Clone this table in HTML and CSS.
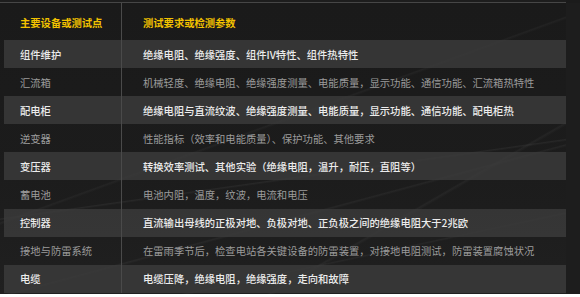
FILE: index.html
```html
<!DOCTYPE html>
<html lang="zh">
<head>
<meta charset="utf-8">
<title>测试要求</title>
<link rel="stylesheet" href="styles.css">
</head>
<body>
<div class="page">
  <div class="topline"></div>
  <div class="main">
    <div class="sheet">
      <div class="row head">
        <div class="c1">主要设备或测试点</div>
        <div class="c2">测试要求或检测参数</div>
      </div>
      <div class="row hi">
        <div class="c1">组件维护</div>
        <div class="c2">绝缘电阻、绝缘强度、组件IV特性、组件热特性</div>
      </div>
      <div class="row lo">
        <div class="c1">汇流箱</div>
        <div class="c2">机械轻度、绝缘电阻、绝缘强度测量、电能质量，显示功能、通信功能、汇流箱热特性</div>
      </div>
      <div class="row hi">
        <div class="c1">配电柜</div>
        <div class="c2">绝缘电阻与直流纹波、绝缘强度测量、电能质量，显示功能、通信功能、配电柜热</div>
      </div>
      <div class="row lo">
        <div class="c1">逆变器</div>
        <div class="c2">性能指标（效率和电能质量）、保护功能、其他要求</div>
      </div>
      <div class="row hi">
        <div class="c1">变压器</div>
        <div class="c2">转换效率测试、其他实验（绝缘电阻，温升，耐压，直阻等）</div>
      </div>
      <div class="row lo">
        <div class="c1">蓄电池</div>
        <div class="c2">电池内阻，温度，纹波，电流和电压</div>
      </div>
      <div class="row hi">
        <div class="c1">控制器</div>
        <div class="c2">直流输出母线的正极对地、负极对地、正负极之间的绝缘电阻大于2兆欧</div>
      </div>
      <div class="row lo">
        <div class="c1">接地与防雷系统</div>
        <div class="c2">在雷雨季节后，检查电站各关键设备的防雷装置，对接地电阻测试，防雷装置腐蚀状况</div>
      </div>
      <div class="row hi">
        <div class="c1">电缆</div>
        <div class="c2">电缆压降，绝缘电阻，绝缘强度，走向和故障</div>
      </div>
    </div>
    <div class="side"></div>
  </div>
  <div class="bottom"></div>
</div>
</body>
</html>
```

FILE: styles.css
```css
html, body {
  margin: 0;
  padding: 0;
  background: #ffffff;
}
.page {
  width: 580px;
  height: 297px;
  display: flex;
  flex-direction: column;
  background: #1b1b1b;
  font-family: "Noto Sans CJK SC", "Noto Sans", sans-serif;
  font-size: 10.3px;
  overflow: hidden;
}
.topline {
  height: 3px;
  width: 566px;
  background: #1d1d1d;
  border-bottom: 1px solid #464646;
  box-sizing: border-box;
  flex: none;
}
.main {
  display: flex;
  flex: 1;
}
.sheet {
  width: 566px;
  box-sizing: border-box;
  padding-left: 4px;
  display: flex;
  flex-direction: column;
  background-color: #181818;
  background-image:
    linear-gradient(172deg, transparent 58%, rgba(255,255,255,0.05) 58.3%, transparent 58.8%),
    linear-gradient(165deg, transparent 66%, rgba(255,255,255,0.045) 66.3%, transparent 66.8%),
    linear-gradient(160deg, transparent 44%, rgba(255,255,255,0.035) 44.3%, transparent 44.8%),
    linear-gradient(150deg, transparent 72%, rgba(255,255,255,0.04) 72.3%, transparent 72.8%),
    linear-gradient(168deg, transparent 80%, rgba(255,255,255,0.04) 80.3%, transparent 80.7%),
    linear-gradient(180deg, #1a1a1a 0%, #1c1c1c 60%, #202020 100%);
}
.side {
  width: 14px;
  background: #1d1d1d;
}
.bottom {
  height: 3px;
  background: #ffffff;
  flex: none;
}
.row {
  display: flex;
  height: 28.1px;
  align-items: stretch;
}
.row .c1 {
  width: 118px;
  box-sizing: border-box;
  padding-left: 16px;
  border-right: 1px solid #4a4a4a;
  display: flex;
  align-items: center;
  white-space: nowrap;
}
.row .c2 {
  flex: 1;
  padding-left: 21px;
  display: flex;
  align-items: center;
  white-space: nowrap;
}
.head {
  height: 37px;
  color: #f2c200;
  font-weight: 700;
  margin-left: -4px;
  padding-left: 4px;
}
.head .c1, .head .c2 {
  padding-top: 1px;
}
.hi {
  background: rgba(60, 60, 60, 0.8);
  color: #ececec;
  font-weight: 500;
}
.lo {
  color: #9b9b9b;
}
```
